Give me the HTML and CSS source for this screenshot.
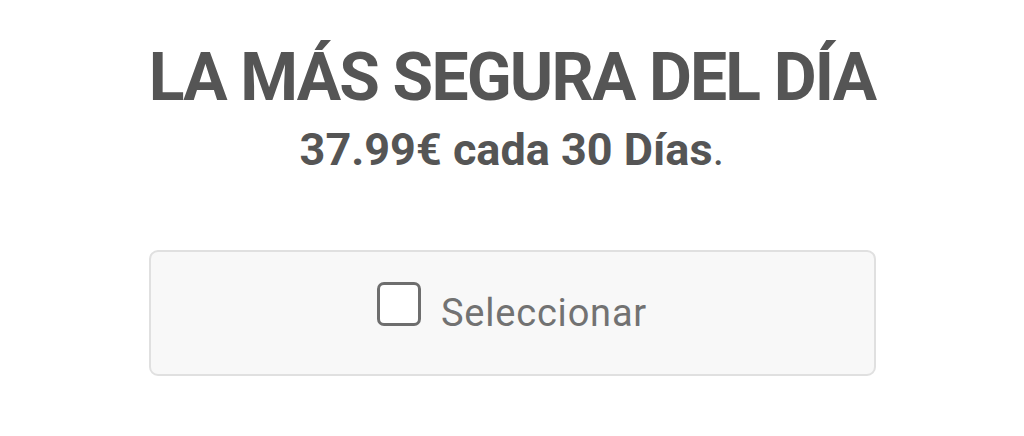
FILE: index.html
```html
<!DOCTYPE html>
<html lang="es">
<head>
  <meta charset="UTF-8">
  <title>La más segura del día</title>
  <link rel="stylesheet" href="styles.css">
</head>
<body>
  <div class="plan">
    <h1 class="plan-title">LA MÁS SEGURA DEL DÍA</h1>
    <p class="plan-price"><strong>37.99€ cada 30 Días</strong>.</p>
    <label class="select-btn">
      <span class="box"></span>
      <span class="select-text">Seleccionar</span>
    </label>
  </div>
</body>
</html>
```

FILE: styles.css
```css
body {
  margin: 0;
  background: #fff;
  font-family: Roboto, "Liberation Sans", sans-serif;
  color: #555;
}

.plan {
  display: flex;
  flex-direction: column;
  align-items: center;
  padding-top: 40px;
}

.plan-title {
  margin: 0;
  font-size: 66px;
  font-weight: 700;
  line-height: 76px;
  letter-spacing: -1.85px;
  color: #555;
}

.plan-price {
  margin: 7px 0 0;
  font-size: 45px;
  font-weight: 400;
  line-height: 54px;
  color: #555;
}

.plan-price strong {
  font-weight: 700;
}

.select-btn {
  box-sizing: border-box;
  margin-top: 73px;
  width: 727px;
  height: 126px;
  border: 2px solid #e0e0e0;
  border-radius: 9px;
  background: #f8f8f8;
  display: flex;
  align-items: center;
  justify-content: center;
  gap: 20px;
}

.box {
  box-sizing: border-box;
  width: 44px;
  height: 44px;
  border: 3px solid #6e6e6e;
  border-radius: 7px;
  background: #fff;
  margin-top: -18px;
}

.select-text {
  font-size: 38px;
  letter-spacing: 0.8px;
  color: #727272;
}
```
